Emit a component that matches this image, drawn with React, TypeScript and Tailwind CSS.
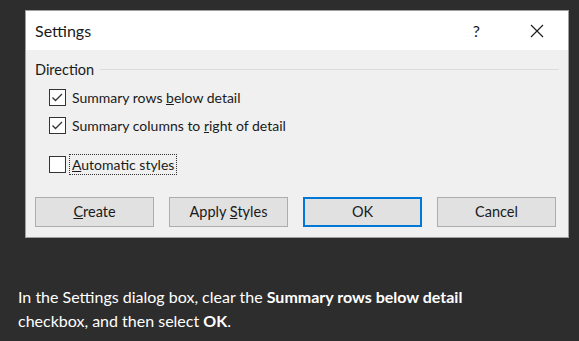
import React from "react";

const font = { fontFamily: 'Lato, "Noto Sans", sans-serif' };

function Check({ checked }: { checked: boolean }) {
  return (
    <div className="w-[17px] h-[17px] border border-[#333333] bg-white flex items-center justify-center shrink-0">
      {checked && (
        <svg width="15" height="15" viewBox="0 0 15 15">
          <polyline points="2.5,7.5 5.5,10.5 12,4" fill="none" stroke="#333333" strokeWidth="1.3" />
        </svg>
      )}
    </div>
  );
}

function Btn({ children, primary }: { children: React.ReactNode; primary?: boolean }) {
  return (
    <div
      className={
        "w-[119px] h-[30px] flex items-center justify-center bg-[#e1e1e1] text-[14.5px] text-[#1a1a1a] " +
        (primary ? "border-2 border-[#0078d7]" : "border border-[#adadad]")
      }
    >
      {children}
    </div>
  );
}

export default function App() {
  return (
    <div className="w-[579px] h-[341px] bg-[#2d2d2d] overflow-hidden" style={font}>
      <div className="pt-[10px] pl-[25px]">
        <div className="w-[544px] h-[228px] border border-[#a0a0a0] bg-[#f0f0f0] flex flex-col">
          <div className="h-[39px] bg-white flex items-center pl-[9px] pr-[24px] shrink-0">
            <span className="text-[16px] text-[#1a1a1a] flex-1">Settings</span>
            <span className="text-[16px] text-[#1a1a1a] mr-[50px]">?</span>
            <svg width="14" height="14" viewBox="0 0 14 14">
              <path d="M1 1 L13 13 M13 1 L1 13" stroke="#1a1a1a" strokeWidth="1.1" />
            </svg>
          </div>
          <div className="pl-[9px] pr-[9px] flex flex-col">
            <div className="mt-[10px] h-[20px] flex items-center">
              <span className="text-[14.5px] text-[#1a1a1a]">Direction</span>
              <div className="flex-1 h-px bg-[#dcdcdc] ml-[6px] mt-[-1px]" />
            </div>
            <div className="pl-[14px] flex flex-col">
              <div className="mt-[9px] h-[17px] flex items-center">
                <Check checked />
                <span className="ml-[6px] text-[14px] text-[#1a1a1a]">
                  Summary rows <u>b</u>elow detail
                </span>
              </div>
              <div className="mt-[11px] h-[17px] flex items-center">
                <Check checked />
                <span className="ml-[6px] text-[14px] text-[#1a1a1a]">
                  Summary columns to <u>r</u>ight of detail
                </span>
              </div>
              <div className="mt-[20px] h-[21px] flex items-center">
                <Check checked={false} />
                <span className="ml-[3px] h-[21px] px-[2px] flex items-center border border-dotted border-[#333333] text-[14px] text-[#1a1a1a]">
                  <span>
                    <u>A</u>utomatic styles
                  </span>
                </span>
              </div>
            </div>
            <div className="mt-[22px] flex gap-[15px]">
              <Btn>
                <span>
                  <u>C</u>reate
                </span>
              </Btn>
              <Btn>
                <span>
                  Apply <u>S</u>tyles
                </span>
              </Btn>
              <Btn primary>OK</Btn>
              <Btn>Cancel</Btn>
            </div>
          </div>
        </div>
      </div>
      <p className="mt-[47px] pl-[18px] pr-[10px] text-[16px] leading-[24px] text-white">
        In the Settings dialog box, clear the <b>Summary rows below detail</b>
        <br />
        checkbox, and then select <b>OK</b>.
      </p>
    </div>
  );
}
